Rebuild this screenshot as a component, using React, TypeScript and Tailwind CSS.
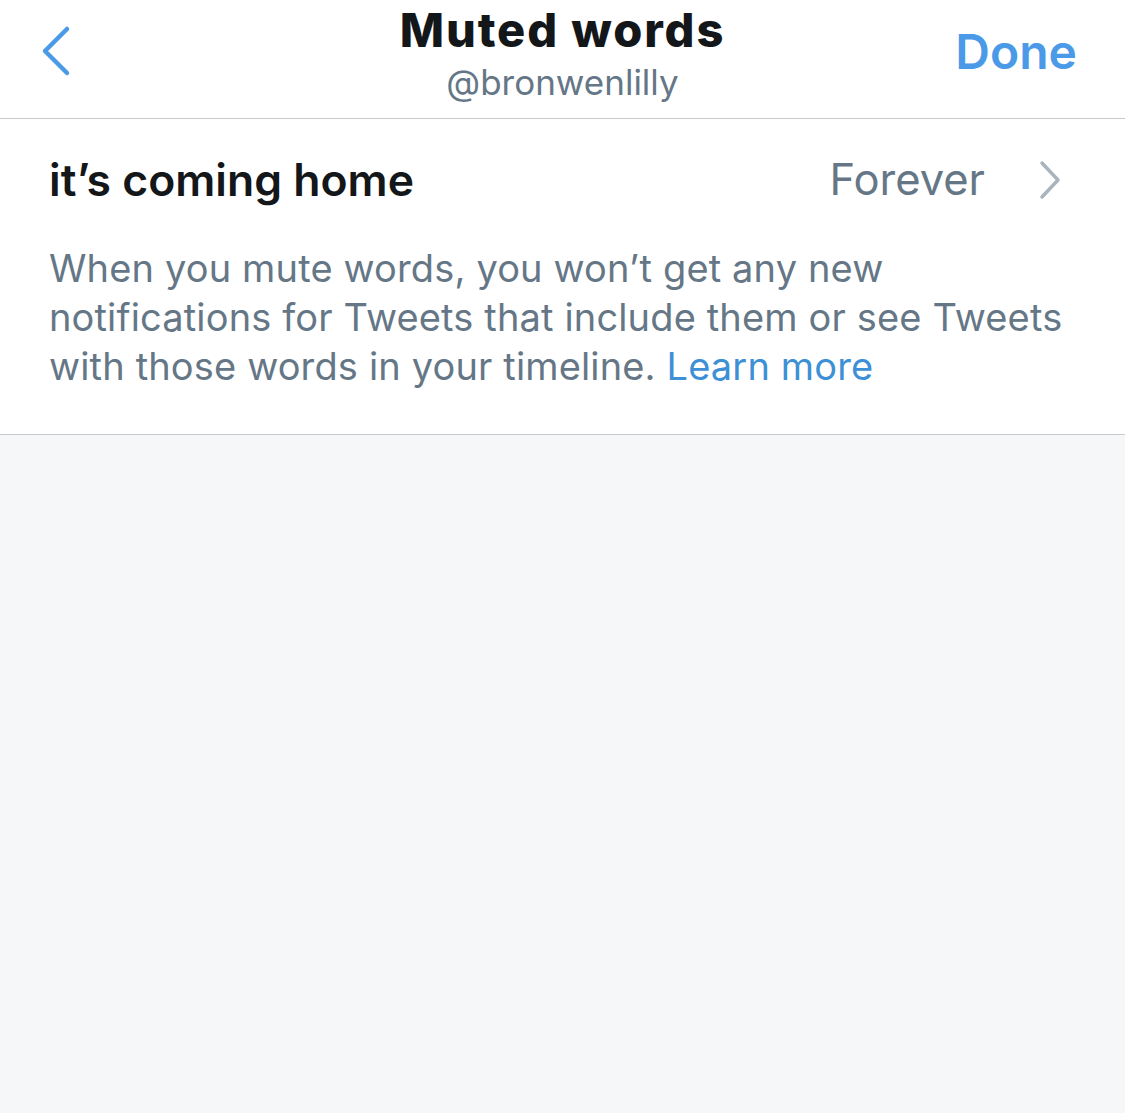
import React from 'react';

function BackChevron() {
  return (
    <svg width="34" height="56" viewBox="0 0 34 56" fill="none">
      <path d="M28 5 L6 27 L28 49" stroke="#4a9ae8" strokeWidth="4.5" strokeLinecap="round" strokeLinejoin="round" />
    </svg>
  );
}

function RowChevron() {
  return (
    <svg width="26" height="42" viewBox="0 0 26 42" fill="none">
      <path d="M5 4 L21 21 L5 38" stroke="#aab4be" strokeWidth="3.5" strokeLinecap="round" strokeLinejoin="round" />
    </svg>
  );
}

export default function App() {
  return (
    <div className="flex min-h-[1113px] w-[1125px] flex-col bg-[#f5f7f9] font-['Inter','Noto_Sans',sans-serif]">
      <header className="relative flex h-[119px] items-start justify-between border-b border-[#c9c9cc] bg-white">
        <div className="pl-[39px] pt-[24px]">
          <BackChevron />
        </div>
        <div className="absolute left-0 right-0 top-[2px] flex flex-col items-center">
          <h1 className="text-[47px] font-extrabold leading-[56px] tracking-[1.9px] text-[#14171a]">Muted words</h1>
          <p className="mt-[3px] text-[35px] leading-[42px] text-[#657786]">@bronwenlilly</p>
        </div>
        <button className="pr-[48px] pt-[22px] text-[48px] font-semibold leading-[60px] text-[#4a9ae8]">Done</button>
      </header>

      <section className="border-b border-[#c9c9cc] bg-white pl-[49px] pr-[44px]">
        <div className="flex h-[122px] items-center justify-between">
          <span className="text-[44.5px] font-semibold text-[#14171a]">it’s coming home</span>
          <div className="flex items-center gap-[52px] pr-[18px]">
            <span className="text-[43.5px] text-[#657786]">Forever</span>
            <RowChevron />
          </div>
        </div>
        <p className="pb-[43px] pt-[3px] text-[38px] leading-[49px] tracking-[0.15px] text-[#657786]">
          When you mute words, you won’t get any new notifications for Tweets that include them or see Tweets with those words in your timeline.{' '}
          <span className="text-[#3d8fd6]">Learn more</span>
        </p>
      </section>

      <div className="flex-1" />
    </div>
  );
}
